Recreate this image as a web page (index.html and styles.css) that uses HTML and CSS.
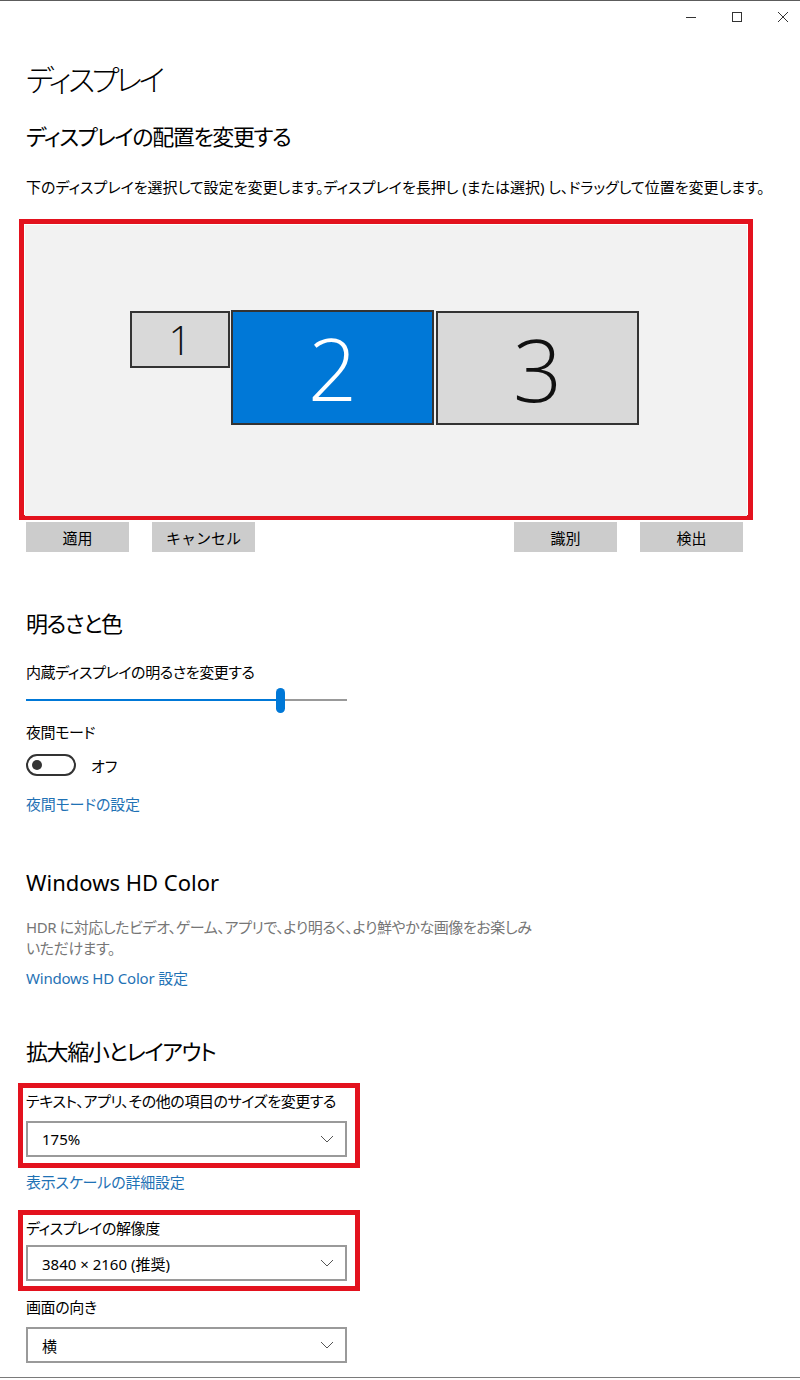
FILE: index.html
```html
<!DOCTYPE html>
<html lang="ja">
<head>
    <meta charset="UTF-8">
    <meta name="viewport" content="width=device-width, initial-scale=1.0">
    <title>ディスプレイ</title>
    <link rel="stylesheet" href="styles.css">
</head>
<body>

    <div class="window">
        <div class="title-bar">
            <span class="win-btn">
                <svg width="12" height="12" viewBox="0 0 12 12"><path d="M1 6.5h10" stroke="#333" stroke-width="1"/></svg>
            </span>
            <span class="win-btn">
                <svg width="12" height="12" viewBox="0 0 12 12"><rect x="1.5" y="1.5" width="9" height="9" fill="none" stroke="#333" stroke-width="1"/></svg>
            </span>
            <span class="win-btn">
                <svg width="12" height="12" viewBox="0 0 12 12"><path d="M1 1l10 10M11 1L1 11" stroke="#333" stroke-width="1"/></svg>
            </span>
        </div>

        <div class="content">
            <h1 class="page-title">ディスプレイ</h1>

            <h2 class="section-title">ディスプレイの配置を変更する</h2>
            <p class="desc">下のディスプレイを選択して設定を変更します。ディスプレイを長押し (または選択) し、ドラッグして位置を変更します。</p>

            <!-- display arrangement -->
            <div class="mark arrange-mark">
                <div class="arrange">
                    <div class="monitor mon-1">1</div>
                    <div class="monitor mon-2 selected">2</div>
                    <div class="monitor mon-3">3</div>
                </div>
            </div>
            <div class="arrange-buttons">
                <div class="btn-group">
                    <button>適用</button>
                    <button>キャンセル</button>
                </div>
                <div class="btn-group">
                    <button>識別</button>
                    <button>検出</button>
                </div>
            </div>

            <h2 class="section-title brightness-title">明るさと色</h2>
            <div class="label label-brightness">内蔵ディスプレイの明るさを変更する</div>
            <div class="slider">
                <div class="slider-fill"></div>
                <div class="slider-thumb"></div>
                <div class="slider-rest"></div>
            </div>
            <div class="label label-night">夜間モード</div>
            <div class="toggle-row">
                <span class="toggle"><span class="knob"></span></span>
                <span>オフ</span>
            </div>
            <a class="link link-night" href="#">夜間モードの設定</a>

            <h2 class="section-title hd-title">Windows HD Color</h2>
            <p class="note">HDR に対応したビデオ、ゲーム、アプリで、より明るく、より鮮やかな画像をお楽しみいただけます。</p>
            <a class="link link-hd" href="#">Windows HD Color 設定</a>

            <h2 class="section-title scale-title">拡大縮小とレイアウト</h2>
            <div class="mark field-mark">
                <div class="label">テキスト、アプリ、その他の項目のサイズを変更する</div>
                <div class="select">
                    <span>175%</span>
                    <svg width="14" height="8" viewBox="0 0 14 8"><path d="M1 1l6 6 6-6" fill="none" stroke="#555" stroke-width="1"/></svg>
                </div>
            </div>
            <a class="link link-scale" href="#">表示スケールの詳細設定</a>

            <div class="mark field-mark res-mark">
                <div class="label">ディスプレイの解像度</div>
                <div class="select">
                    <span>3840 × 2160 (推奨)</span>
                    <svg width="14" height="8" viewBox="0 0 14 8"><path d="M1 1l6 6 6-6" fill="none" stroke="#555" stroke-width="1"/></svg>
                </div>
            </div>

            <div class="label label-orient">画面の向き</div>
            <div class="select orient-select">
                <span>横</span>
                <svg width="14" height="8" viewBox="0 0 14 8"><path d="M1 1l6 6 6-6" fill="none" stroke="#555" stroke-width="1"/></svg>
            </div>
        </div>
    </div>

</body>
</html>
```

FILE: styles.css
```css
body {
    margin: 0;
    padding: 0;
    background-color: #fff;
    color: #000;
    font-family: "Noto Sans", "Noto Sans CJK JP", sans-serif;
    font-feature-settings: "palt";
    font-size: 15px;
}

.window {
    box-sizing: border-box;
    height: 1378px;
    border-top: 1px solid #5c5c5c;
    border-bottom: 1px solid #7a7a7a;
    overflow: hidden;
}

.title-bar {
    height: 31px;
    display: flex;
    justify-content: flex-end;
    align-items: center;
    gap: 34px;
    padding-right: 11px;
}

.win-btn {
    width: 12px;
    display: flex;
    justify-content: center;
}

.content {
    padding-left: 26px;
}

.page-title {
    margin: 28px 0 0;
    font-size: 30px;
    line-height: 40px;
    font-weight: 300;
    letter-spacing: -3.5px;
}

.section-title {
    margin: 21px 0 0;
    font-size: 22px;
    line-height: 30px;
    font-weight: 400;
    letter-spacing: -1.4px;
}

.desc {
    margin: 25px 0 0;
    font-size: 15px;
    line-height: 22px;
    white-space: nowrap;
}

/* red annotation frames */
.mark {
    border: 5px solid #e3121e;
}

.arrange-mark {
    margin: 21px 0 0 -7px;
    width: 724px;
    height: 291px;
}

.arrange {
    position: relative;
    height: 100%;
    margin: 1px;
    background-color: #f2f2f2;
}

.monitor {
    position: absolute;
    box-sizing: border-box;
    border: 2px solid #333;
    background-color: #d9d9d9;
    color: #111;
    display: flex;
    justify-content: center;
    align-items: center;
    font-family: "Open Sans", "Noto Sans", sans-serif;
    font-weight: 300;
    font-size: 86px;
}

.mon-1 {
    left: 105px;
    top: 86px;
    width: 100px;
    height: 57px;
    font-size: 40px;
}

.mon-2 {
    left: 206px;
    top: 85px;
    width: 203px;
    height: 115px;
}

.mon-3 {
    left: 411px;
    top: 86px;
    width: 203px;
    height: 114px;
}

.monitor.selected {
    background-color: #0078d7;
    color: #fff;
}

.arrange-buttons {
    display: flex;
    justify-content: space-between;
    width: 717px;
    margin-top: 2px;
}

.btn-group {
    display: flex;
    gap: 23px;
}

button {
    width: 103px;
    height: 30px;
    border: none;
    background-color: #cccccc;
    color: #000;
    font-family: inherit;
    font-size: 15px;
    padding: 0;
}

.brightness-title {
    margin-top: 56px;
}

.label {
    font-size: 15px;
    line-height: 22px;
    letter-spacing: -0.4px;
}

.label-brightness {
    margin-top: 23px;
}

.slider {
    display: flex;
    align-items: center;
    width: 321px;
    height: 26px;
    margin-top: 4px;
}

.slider-fill {
    width: 250px;
    height: 2px;
    background-color: #0078d7;
}

.slider-thumb {
    width: 9px;
    height: 25px;
    border-radius: 5px;
    background-color: #0078d7;
}

.slider-rest {
    flex-grow: 1;
    height: 2px;
    background-color: #999;
}

.label-night {
    margin-top: 8px;
}

.toggle-row {
    display: flex;
    align-items: center;
    gap: 15px;
    margin-top: 11px;
    height: 22px;
}

.toggle {
    box-sizing: border-box;
    width: 50px;
    height: 22px;
    border: 2px solid #333;
    border-radius: 11px;
    display: flex;
    align-items: center;
    padding-left: 4px;
}

.knob {
    width: 10px;
    height: 10px;
    border-radius: 50%;
    background-color: #333;
}

.link {
    display: block;
    color: #1f72b5;
    text-decoration: none;
    line-height: 22px;
    letter-spacing: -0.2px;
}

.link-night {
    margin-top: 17px;
}

.hd-title {
    margin-top: 52px;
    letter-spacing: 0;
}

.note {
    margin: 20px 0 0;
    max-width: 515px;
    color: #767676;
    line-height: 21px;
    letter-spacing: -0.4px;
}

.link-hd {
    margin-top: 8px;
}

.scale-title {
    margin-top: 47px;
}

.field-mark {
    margin: 17px 0 0 -8px;
    width: 329px;
    padding: 2px 0 6px 3px;
}

.select {
    box-sizing: border-box;
    display: flex;
    justify-content: space-between;
    align-items: center;
    width: 321px;
    height: 36px;
    padding: 0 11px 0 14px;
    border: 2px solid #9a9a9a;
    margin-top: 9px;
}

.link-scale {
    margin-top: 3px;
}

.res-mark {
    margin-top: 17px;
    padding-bottom: 5px;
}

.res-mark .select {
    margin-top: 6px;
}

.label-orient {
    margin-top: 5px;
}

.orient-select {
    margin-top: 9px;
}
```
